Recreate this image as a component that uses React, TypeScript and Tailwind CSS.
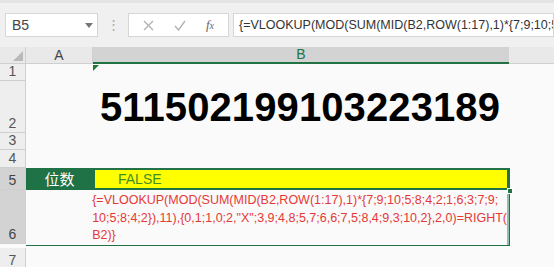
import React from "react";

const font = { fontFamily: '"Liberation Sans", "Noto Sans CJK SC", sans-serif' };

function RowHead({ label, h, selected }: { label: string; h: string; selected?: boolean }) {
  return (
    <div
      className={`w-[26px] shrink-0 ${h} flex items-end justify-center border-r border-b border-[#cfcfcf] text-[14px] leading-none pb-[2px] ${
        selected ? "bg-[#d3d3d3] text-[#444]" : "bg-[#eeeeee] text-[#555]"
      }`}
    >
      {label}
    </div>
  );
}

export default function App() {
  return (
    <div className="w-[554px] h-[267px] overflow-hidden bg-[#fafafa] text-[#333]" style={font}>
      {/* formula bar */}
      <div className="h-[47px] bg-[#f0f0f0] border-t-[3px] border-[#e4e4e4] flex items-center pl-[5px] gap-0">
        <div className="w-[93px] h-[24px] bg-white border border-[#d6d6d6] flex items-center justify-between pl-[6px] pr-[4px] text-[14px] text-[#444]">
          <span>B5</span>
          <svg width="8" height="5" viewBox="0 0 8 5">
            <path d="M0 0 L8 0 L4 5 Z" fill="#777" />
          </svg>
        </div>
        <div className="w-[30px] flex justify-center text-[#aaa] text-[13px]">⋮</div>
        <div className="w-[101px] h-[24px] bg-white border border-[#d6d6d6] flex items-center justify-around px-[4px] text-[#aaa]">
          <svg width="11" height="11" viewBox="0 0 11 11">
            <path d="M1 1 L10 10 M10 1 L1 10" stroke="#b3b3b3" strokeWidth="1.4" />
          </svg>
          <svg width="12" height="11" viewBox="0 0 12 11">
            <path d="M1 6 L4.5 10 L11 1" stroke="#b3b3b3" strokeWidth="1.4" fill="none" />
          </svg>
          <span className="text-[13px] italic text-[#666]" style={{ fontFamily: '"Liberation Serif", serif' }}>
            f<span className="text-[10px]">x</span>
          </span>
        </div>
        <div className="ml-[4px] flex-1 h-[24px] bg-white border border-[#d6d6d6] flex items-center pl-[5px] text-[12.5px] text-[#333] whitespace-nowrap overflow-hidden">
          {"{=VLOOKUP(MOD(SUM(MID(B2,ROW(1:17),1)*{7;9;10;5"}
        </div>
      </div>

      {/* column header */}
      <div className="flex h-[17px] bg-[#e9e9e9] text-[14px]">
        <div className="w-[26px] shrink-0 border-r border-b border-[#cfcfcf] flex items-end justify-end p-[2px]">
          <svg width="10" height="10" viewBox="0 0 10 10">
            <path d="M10 0 L10 10 L0 10 Z" fill="#b9b9b9" />
          </svg>
        </div>
        <div className="w-[67px] shrink-0 border-r border-b border-[#cfcfcf] flex items-center justify-center text-[#444]">A</div>
        <div className="w-[416px] shrink-0 bg-[#d3d3d3] border-b-2 border-[#217346] flex items-center justify-center text-[#217346]">B</div>
        <div className="flex-1 border-b border-[#cfcfcf]" />
      </div>

      {/* row 1 */}
      <div className="flex">
        <RowHead label="1" h="h-[17px]" />
        <div className="w-[67px]" />
        <div className="w-[416px] relative">
          <svg className="absolute left-0 top-[1px]" width="6" height="6" viewBox="0 0 6 6">
            <path d="M0 0 L6 0 L0 6 Z" fill="#1e7a2e" />
          </svg>
        </div>
      </div>

      {/* row 2 */}
      <div className="flex">
        <RowHead label="2" h="h-[52px]" />
        <div className="w-[67px]" />
        <div className="w-[416px] flex items-center pl-[7px] text-[40px] font-bold text-black leading-none tracking-[0.1px]">
          511502199103223189
        </div>
      </div>

      {/* rows 3, 4 */}
      <div className="flex">
        <RowHead label="3" h="h-[17px]" />
      </div>
      <div className="flex">
        <RowHead label="4" h="h-[18px]" />
      </div>

      {/* rows 5 + 6 */}
      <div className="flex">
        <div className="flex flex-col">
          <RowHead label="5" h="h-[22px]" selected />
          <RowHead label="6" h="h-[54px]" selected />
        </div>
        <div className="w-[484px] shrink-0 border border-[#217346] border-l-0 flex flex-col relative">
          <div className="flex h-[22px] -mt-px">
            <div className="w-[67px] bg-[#1f7245] text-white text-[15px] flex items-center justify-center" style={{ fontFamily: '"Noto Sans CJK SC", sans-serif' }}>
              位数
            </div>
            <div className="flex-1 bg-[#ffff00] border-2 border-[#217346] flex items-center pl-[23px] text-[14px] text-[#3e8f26]">
              FALSE
            </div>
          </div>
          <div className="flex flex-1">
            <div className="w-[67px]" />
            <div className="flex-1 border-r-2 border-[#8cc0a8] pl-[2px] pt-[2px] text-[12.5px] leading-[17.5px] text-[#e53935] whitespace-nowrap">
              {"{=VLOOKUP(MOD(SUM(MID(B2,ROW(1:17),1)*{7;9;10;5;8;4;2;1;6;3;7;9;"}
              <br />
              {'10;5;8;4;2}),11),{0,1;1,0;2,"X";3,9;4,8;5,7;6,6;7,5;8,4;9,3;10,2},2,0)=RIGHT('}
              <br />
              {"B2)}"}
            </div>
          </div>
          <div className="absolute right-[-4px] top-[19px] w-[6px] h-[6px] bg-[#217346] border border-white" />
        </div>
      </div>

      {/* row 7 */}
      <div className="flex mt-[2px]">
        <RowHead label="7" h="h-[22px]" />
      </div>
    </div>
  );
}
